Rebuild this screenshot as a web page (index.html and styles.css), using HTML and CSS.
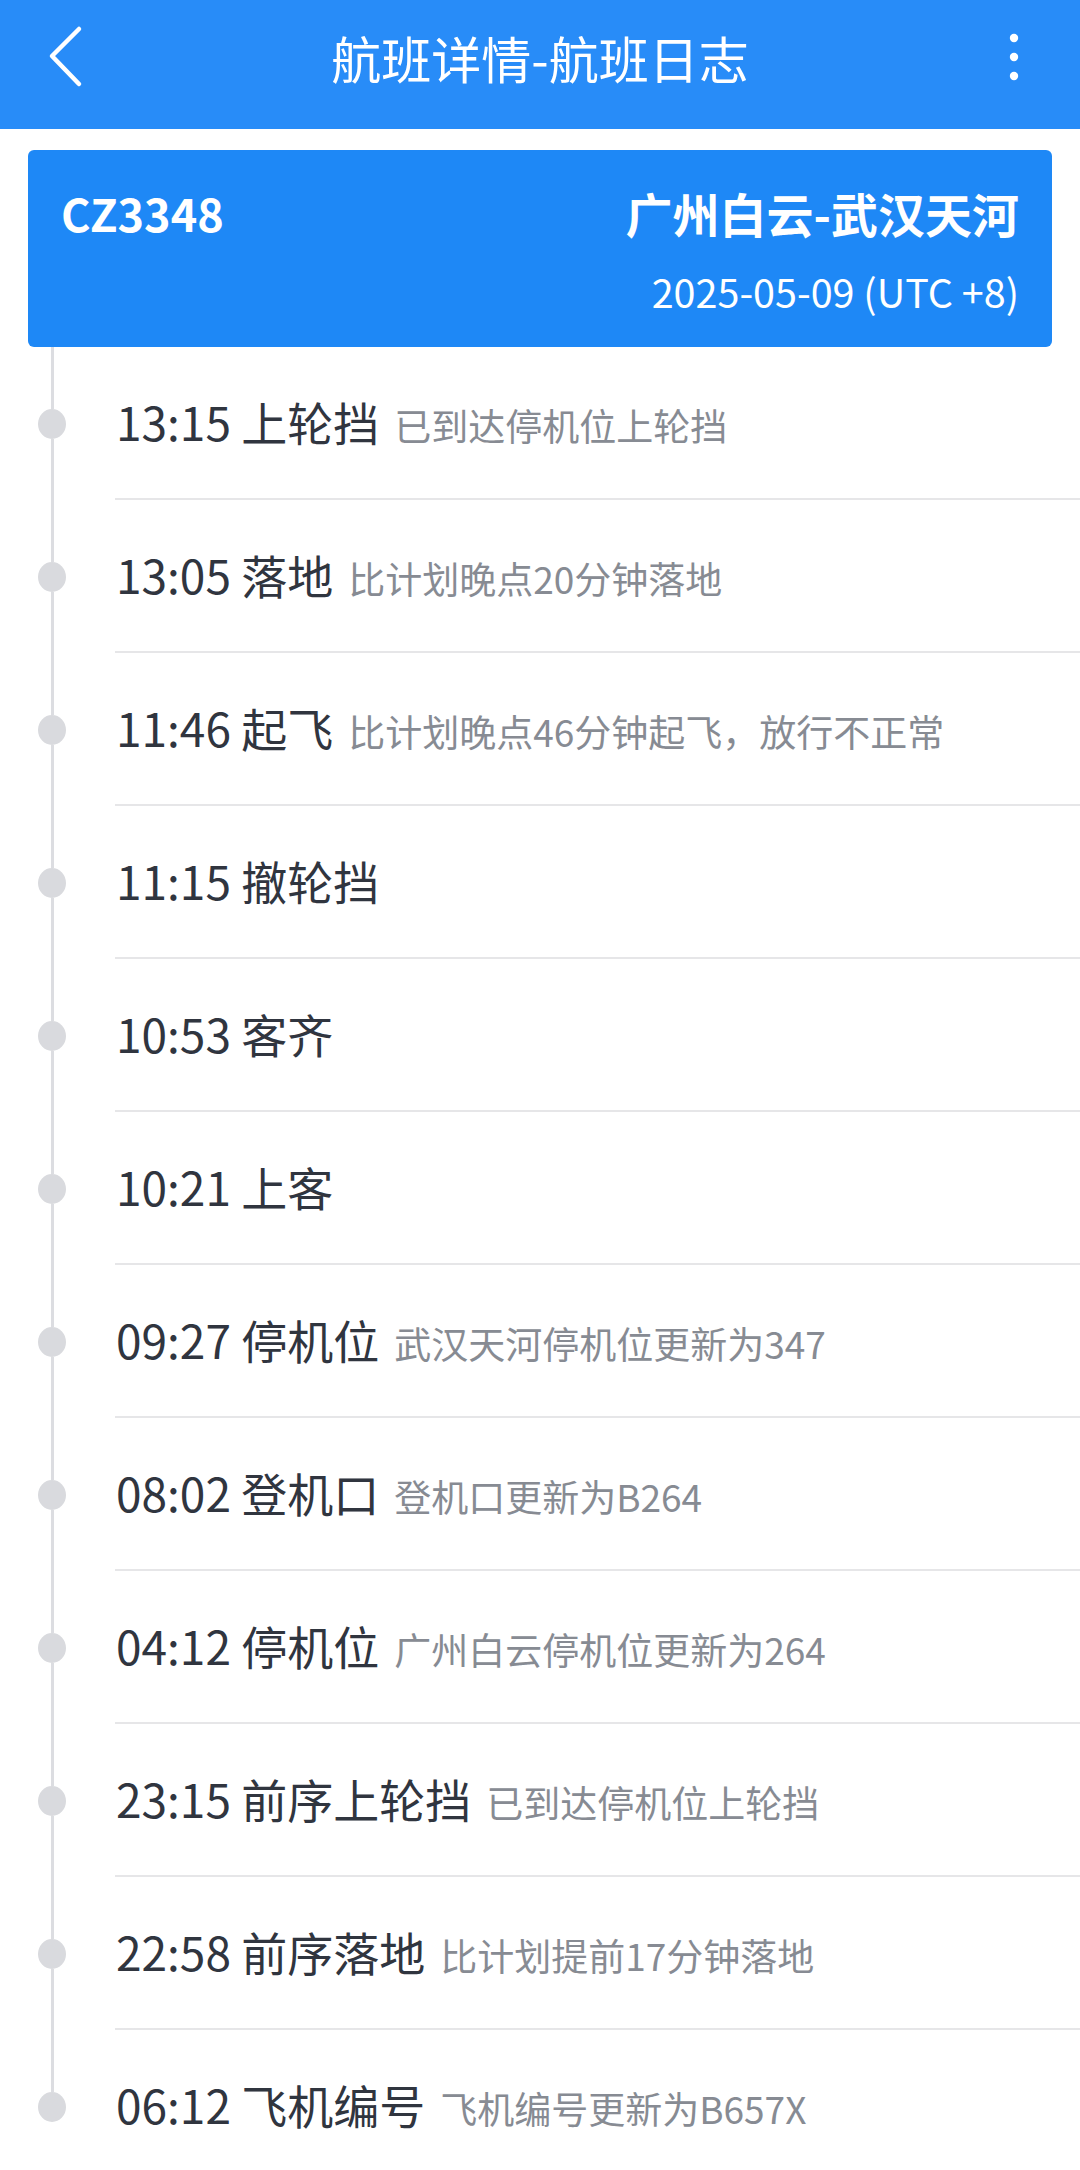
FILE: index.html
```html
<!DOCTYPE html>
<html lang="zh-CN">
<head>
<meta charset="utf-8">
<title>航班详情-航班日志</title>
<link rel="stylesheet" href="styles.css">
</head>
<body>
<header class="topbar">
  <div class="topbar-inner">
    <div class="side side-left">
      <button class="icon-btn back" aria-label="返回">
        <svg width="40" height="64" viewBox="0 0 40 64"><polyline points="33,4 6,31 33,59" fill="none" stroke="#fff" stroke-width="4.5" stroke-linecap="round" stroke-linejoin="round"/></svg>
      </button>
    </div>
    <h1 class="title">航班详情-航班日志</h1>
    <div class="side side-right">
      <button class="icon-btn more" aria-label="更多">
        <svg width="16" height="56" viewBox="0 0 16 56"><circle cx="8" cy="9" r="4.2" fill="#fff"/><circle cx="8" cy="28" r="4.2" fill="#fff"/><circle cx="8" cy="47" r="4.2" fill="#fff"/></svg>
      </button>
    </div>
  </div>
</header>

<main class="content">
  <section class="flight-card">
    <div class="card-row">
      <span class="flight-no">CZ3348</span>
      <span class="route">广州白云-武汉天河</span>
    </div>
    <div class="card-date">2025-05-09 (UTC +8)</div>
  </section>

  <ul class="timeline">
    <li class="event"><div class="rail"><span class="seg"></span><span class="dot"></span><span class="seg"></span></div><div class="body"><span class="main">13:15 上轮挡</span><span class="desc">已到达停机位上轮挡</span></div></li>
    <li class="event"><div class="rail"><span class="seg"></span><span class="dot"></span><span class="seg"></span></div><div class="body"><span class="main">13:05 落地</span><span class="desc">比计划晚点20分钟落地</span></div></li>
    <li class="event"><div class="rail"><span class="seg"></span><span class="dot"></span><span class="seg"></span></div><div class="body"><span class="main">11:46 起飞</span><span class="desc">比计划晚点46分钟起飞，放行不正常</span></div></li>
    <li class="event"><div class="rail"><span class="seg"></span><span class="dot"></span><span class="seg"></span></div><div class="body"><span class="main">11:15 撤轮挡</span></div></li>
    <li class="event"><div class="rail"><span class="seg"></span><span class="dot"></span><span class="seg"></span></div><div class="body"><span class="main">10:53 客齐</span></div></li>
    <li class="event"><div class="rail"><span class="seg"></span><span class="dot"></span><span class="seg"></span></div><div class="body"><span class="main">10:21 上客</span></div></li>
    <li class="event"><div class="rail"><span class="seg"></span><span class="dot"></span><span class="seg"></span></div><div class="body"><span class="main">09:27 停机位</span><span class="desc">武汉天河停机位更新为347</span></div></li>
    <li class="event"><div class="rail"><span class="seg"></span><span class="dot"></span><span class="seg"></span></div><div class="body"><span class="main">08:02 登机口</span><span class="desc">登机口更新为B264</span></div></li>
    <li class="event"><div class="rail"><span class="seg"></span><span class="dot"></span><span class="seg"></span></div><div class="body"><span class="main">04:12 停机位</span><span class="desc">广州白云停机位更新为264</span></div></li>
    <li class="event"><div class="rail"><span class="seg"></span><span class="dot"></span><span class="seg"></span></div><div class="body"><span class="main">23:15 前序上轮挡</span><span class="desc">已到达停机位上轮挡</span></div></li>
    <li class="event"><div class="rail"><span class="seg"></span><span class="dot"></span><span class="seg"></span></div><div class="body"><span class="main">22:58 前序落地</span><span class="desc">比计划提前17分钟落地</span></div></li>
    <li class="event last"><div class="rail"><span class="seg"></span><span class="dot"></span><span class="seg"></span></div><div class="body"><span class="main">06:12 飞机编号</span><span class="desc">飞机编号更新为B657X</span></div></li>
  </ul>
</main>
</body>
</html>
```

FILE: styles.css
```css
* { box-sizing: border-box; }

html, body {
  margin: 0;
  padding: 0;
  background: #ffffff;
  font-family: "Noto Sans CJK SC", "Noto Sans", sans-serif;
}

body {
  width: 1080px;
  height: 2170px;
  overflow: hidden;
}

.topbar {
  background: #288cf8;
  height: 129px;
  padding-bottom: 15px;
}

.topbar-inner {
  height: 114px;
  display: grid;
  grid-template-columns: 1fr auto 1fr;
  align-items: center;
}

.side {
  display: flex;
  align-items: center;
}

.side-right {
  justify-content: flex-end;
}

.icon-btn {
  background: none;
  border: 0;
  padding: 0;
  display: flex;
  align-items: center;
  justify-content: center;
}

.back {
  width: 40px;
  height: 64px;
  margin-left: 46px;
}

.more {
  width: 16px;
  height: 56px;
  margin-right: 58px;
}

.title {
  margin: 0;
  font-size: 50px;
  font-weight: 400;
  color: #ffffff;
  line-height: 1;
}

.content {
  padding: 21px 0 0;
}

.flight-card {
  margin: 0 28px;
  background: #1e88f6;
  border-radius: 6px;
  color: #ffffff;
  padding: 30px 33px 0 33px;
  height: 197px;
}

.card-row {
  display: flex;
  justify-content: space-between;
  align-items: center;
  height: 64px;
}

.flight-no {
  font-size: 45px;
  font-weight: 700;
  line-height: 1;
}

.route {
  font-size: 47px;
  font-weight: 700;
  line-height: 1;
}

.card-date {
  text-align: right;
  font-size: 39.5px;
  line-height: 1;
  margin-top: 27px;
}

.timeline {
  list-style: none;
  margin: 0;
  padding: 0;
}

.event {
  display: flex;
  height: 153px;
}

.rail {
  width: 104px;
  display: flex;
  flex-direction: column;
  align-items: center;
  flex: none;
}

.seg {
  flex: 1;
  width: 3px;
  background: #dcdde1;
}

.event.last .seg:last-child {
  background: transparent;
}

.dot {
  width: 28px;
  height: 30px;
  border-radius: 50%;
  background: #d9dade;
  flex: none;
}

.body {
  flex: 1;
  margin-left: 11px;
  border-bottom: 2px solid #e6e6e8;
  display: flex;
  align-items: baseline;
  padding-top: 46px;
  padding-left: 1px;
}

.event.last .body {
  border-bottom: 0;
}

.main {
  font-size: 46px;
  color: #30353f;
  line-height: 56px;
}

.desc {
  font-size: 37px;
  color: #878b93;
  margin-left: 15px;
}
```
